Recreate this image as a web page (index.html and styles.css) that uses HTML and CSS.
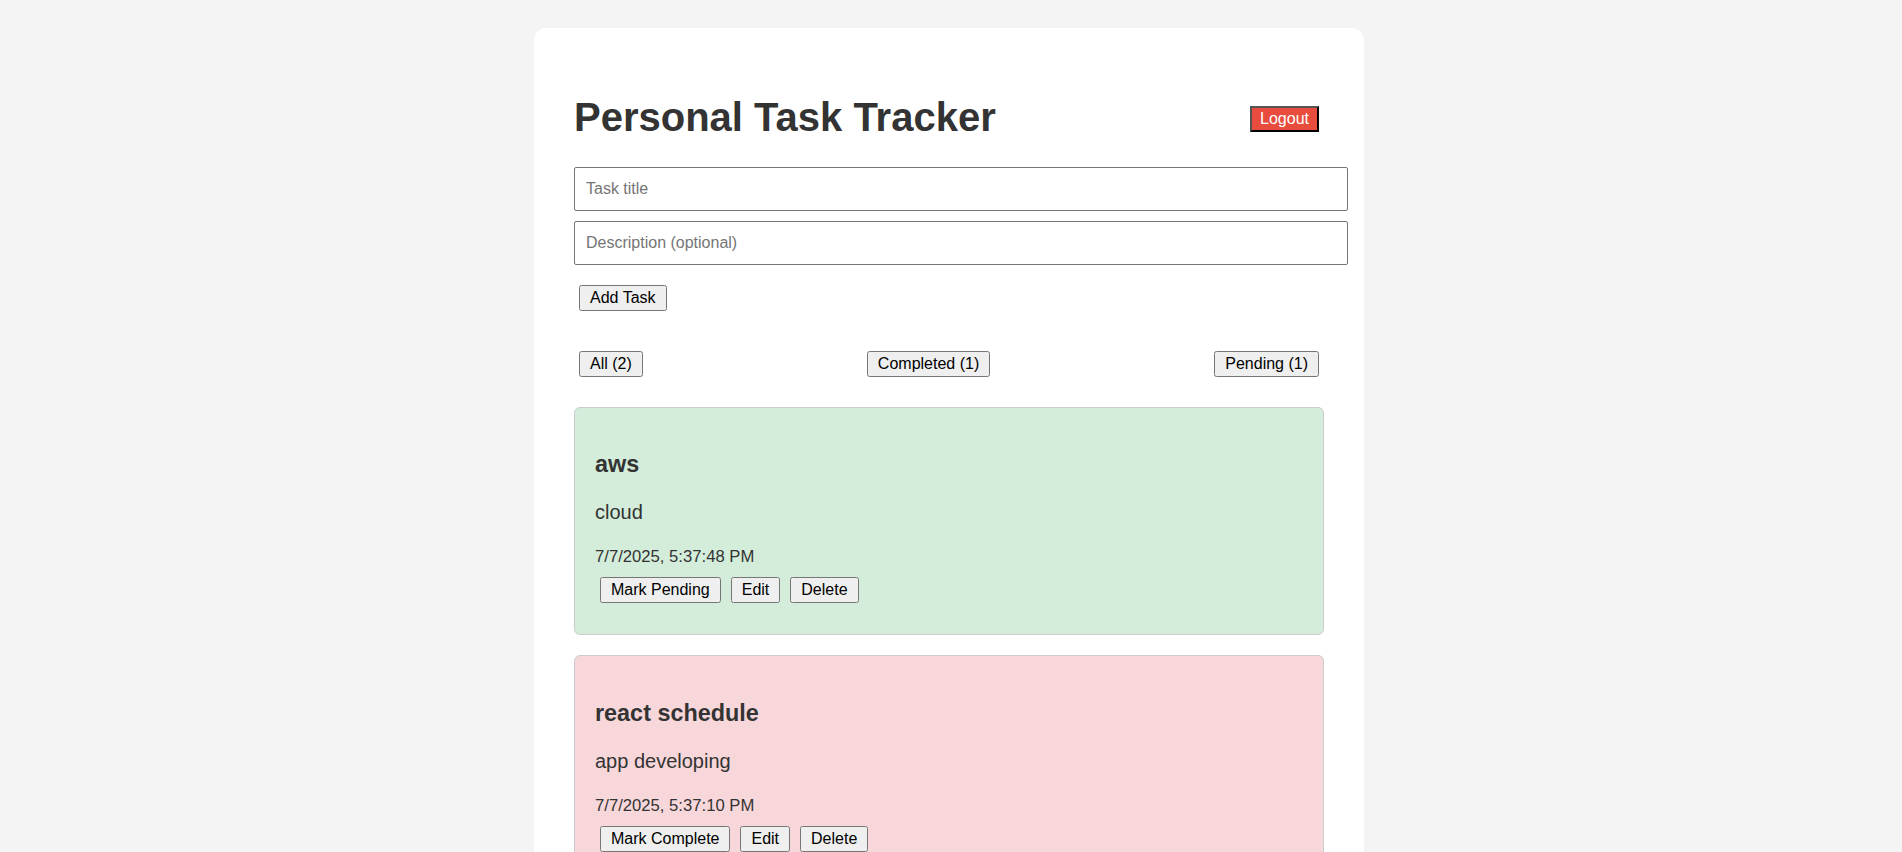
FILE: index.html
```html
<!DOCTYPE html>
<html lang="en">
<head>
<meta charset="utf-8">
<title>Personal Task Tracker</title>
<link rel="stylesheet" href="styles.css">
</head>
<body>
<div class="app">
  <div class="header">
    <h1 class="title">Personal Task Tracker</h1>
    <button class="btn logout" type="button">Logout</button>
  </div>
  <form class="task-form">
    <input class="field" type="text" placeholder="Task title">
    <input class="field" type="text" placeholder="Description (optional)">
    <div class="row"><button class="btn" type="button">Add Task</button></div>
  </form>
  <div class="filters">
    <button class="btn" type="button">All (2)</button>
    <button class="btn" type="button">Completed (1)</button>
    <button class="btn" type="button">Pending (1)</button>
  </div>
  <div class="task-list">
    <div class="task done">
      <h3 class="task-title">aws</h3>
      <p class="task-desc">cloud</p>
      <div class="task-meta"><small>7/7/2025, 5:37:48 PM</small></div>
      <div class="row"><button class="btn" type="button">Mark Pending</button><button class="btn" type="button">Edit</button><button class="btn" type="button">Delete</button></div>
    </div>
    <div class="task pending">
      <h3 class="task-title">react schedule</h3>
      <p class="task-desc">app developing</p>
      <div class="task-meta"><small>7/7/2025, 5:37:10 PM</small></div>
      <div class="row"><button class="btn" type="button">Mark Complete</button><button class="btn" type="button">Edit</button><button class="btn" type="button">Delete</button></div>
    </div>
  </div>
</div>
</body>
</html>
```

FILE: styles.css
```css
html {
  background: #f4f4f4;
}

body {
  margin: 8px 12px 8px 8px;
  font-family: "Liberation Sans", Arial, sans-serif;
  font-size: 20px;
  color: #333;
  background: #f4f4f4;
}

.app {
  max-width: 750px;
  margin: 20px auto;
  padding: 40px;
  background: #fff;
  border-radius: 12px;
}

.header {
  display: flex;
  justify-content: space-between;
  align-items: center;
}

.title {
  font-size: 40px;
  margin: 26.8px 0;
  color: #333;
}

.btn {
  font-family: "Liberation Sans", Arial, sans-serif;
  font-size: 16px;
  padding: 2px 9px;
  margin: 10px 5px;
}

.logout {
  background: #e74c3c;
  color: #fff;
  padding: 2px 8px;
  margin: 12px 5px 8px;
}

.task-form {
  margin: 0;
}

.field {
  display: block;
  width: 100%;
  padding: 12px 11px;
  margin: 0 0 10px;
  border: 1px solid #767676;
  border-radius: 2px;
  font-family: "Liberation Sans", Arial, sans-serif;
  font-size: 16px;
  color: #333;
  background: #fff;
}

.field::placeholder {
  color: #757575;
}

.row {
  display: flex;
}

.filters {
  display: flex;
  justify-content: space-between;
  margin: 20px 0;
}

.task {
  background: #fff;
  border: 1px solid #ccc;
  border-radius: 6px;
  padding: 20px 20px 21px;
  margin-bottom: 20px;
}

.task.done {
  background: #d4edda;
}

.task.pending {
  background: #f8d7da;
}

.task-title {
  font-size: 1.17em;
  margin: 1em 0;
}

.task-desc {
  margin: 20px 0;
}
```
